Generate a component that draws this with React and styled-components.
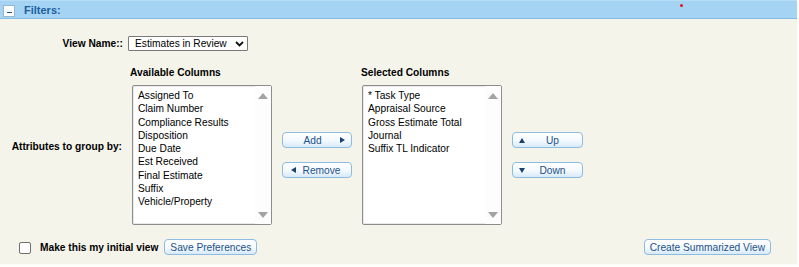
import React from "react";
import styled, { createGlobalStyle } from "styled-components";

const GlobalStyle = createGlobalStyle`
  html, body {
    margin: 0;
    padding: 0;
    background: #ffffff;
  }
  body {
    font-family: "Liberation Sans", Arial, sans-serif;
    font-size: 10.2px;
    color: #000;
  }
`;

const Panel = styled.div`
  width: 797px;
  height: 264px;
  display: flex;
  flex-direction: column;
  background: #f5f4eb;
  border-right: 1px solid #fbfaf5;
  border-bottom: 1px solid #fbfaf5;
`;

const Header = styled.div`
  height: 17px;
  display: flex;
  align-items: center;
  gap: 9px;
  padding: 0 3px;
  background: #a4d3f4;
  border-top: 1px solid #b6dcf6;
  border-bottom: 1px solid #85bce5;
  position: relative;
`;

const Toggle = styled.span`
  width: 10px;
  height: 10px;
  margin-top: 3px;
  display: flex;
  align-items: center;
  justify-content: center;
  background: #fcfdfe;
  border: 1px solid #9ab6cc;
  &::after {
    content: "";
    width: 5px;
    height: 1px;
    margin-top: 2px;
    background: #1d4c7c;
  }
`;

const Title = styled.span`
  font-size: 11px;
  font-weight: bold;
  color: #215f9c;
`;

const RedDot = styled.span`
  position: absolute;
  left: 680px;
  top: 3px;
  width: 3px;
  height: 3px;
  border-radius: 50%;
  background: #e4101e;
`;

const Body = styled.div`
  flex: 1;
  display: flex;
  flex-direction: column;
  padding-top: 17px;
`;

const ViewRow = styled.div`
  display: flex;
  align-items: center;
  gap: 5px;
`;

const Label = styled.div`
  width: ${(p) => p.$width || 123}px;
  text-align: right;
  font-weight: bold;
`;

const SelectBox = styled.div`
  box-sizing: border-box;
  width: 120px;
  height: 15px;
  display: flex;
  align-items: center;
  justify-content: space-between;
  padding: 0 3px 0 6px;
  background: #fff;
  border: 1px solid #7a7a7a;
  border-radius: 1px;
`;

const Grid = styled.div`
  display: grid;
  grid-template-columns: 122px 140px 70px 140px 71px;
  grid-template-rows: 20px 140px;
  column-gap: 10px;
  margin-top: 14px;
`;

const GroupLabel = styled(Label)`
  grid-row: 1 / span 2;
  grid-column: 1;
  align-self: center;
  width: auto;
  padding-top: 2px;
`;

const ColHead = styled.div`
  grid-row: 1;
  grid-column: ${(p) => p.$col};
  margin-left: ${(p) => p.$shift}px;
  padding-top: 2px;
  font-weight: bold;
`;

const ListBox = styled.div`
  grid-row: 2;
  grid-column: ${(p) => p.$col};
  display: flex;
  background: #fff;
  border: 1px solid #8d8d8d;
  border-radius: 2px;
  box-shadow: inset 0 0 0 1px #e9e9e9;
`;

const Items = styled.ul`
  flex: 1;
  list-style: none;
  margin: 0;
  padding: 3px 0 0 5px;
  li {
    line-height: 13.25px;
    white-space: nowrap;
  }
`;

const Scroll = styled.div`
  width: 16px;
  display: flex;
  flex-direction: column;
  justify-content: space-between;
  align-items: center;
  padding: 7px 0 6px;
  background: #fdfdfd;
`;

const Arrow = styled.span`
  width: 0;
  height: 0;
  border-left: 5px solid transparent;
  border-right: 5px solid transparent;
  ${(p) =>
    p.$down
      ? "border-top: 6px solid #a3a3a3;"
      : "border-bottom: 6px solid #a3a3a3;"}
`;

const ButtonStack = styled.div`
  grid-row: 2;
  grid-column: ${(p) => p.$col};
  display: flex;
  flex-direction: column;
  justify-content: center;
  gap: 14px;
`;

const Button = styled.button`
  height: 16px;
  display: flex;
  align-items: center;
  padding: 0 ${(p) => p.$pad ?? 6}px;
  gap: 4px;
  font-family: "Liberation Sans", Arial, sans-serif;
  font-size: 10.2px;
  color: #1f5286;
  background: linear-gradient(#ffffff 0%, #f3f9fe 55%, #d6eaf9 100%);
  border: 1px solid #8fbbe0;
  border-radius: 4px;
  cursor: pointer;
`;

const BtnText = styled.span`
  flex: 1;
  text-align: center;
`;

const Tri = styled.span`
  width: 0;
  height: 0;
  ${(p) =>
    ({
      right:
        "border-top: 3.5px solid transparent; border-bottom: 3.5px solid transparent; border-left: 5px solid #1b406d;",
      left:
        "border-top: 3.5px solid transparent; border-bottom: 3.5px solid transparent; border-right: 5px solid #1b406d;",
      up:
        "border-left: 3.5px solid transparent; border-right: 3.5px solid transparent; border-bottom: 5px solid #1b406d;",
      down:
        "border-left: 3.5px solid transparent; border-right: 3.5px solid transparent; border-top: 5px solid #1b406d;",
    })[p.$dir]}
`;

const Footer = styled.div`
  display: flex;
  align-items: center;
  margin-top: 14px;
  padding: 0 26px 0 19px;
`;

const Check = styled.span`
  width: 10px;
  height: 10px;
  margin: 1px 9px 0 0;
  background: #fff;
  border: 1px solid #6f6f6f;
  border-radius: 2px;
`;

const CheckLabel = styled.span`
  font-weight: bold;
  margin-right: 6px;
`;

const Spacer = styled.div`
  flex: 1;
`;

const available = [
  "Assigned To",
  "Claim Number",
  "Compliance Results",
  "Disposition",
  "Due Date",
  "Est Received",
  "Final Estimate",
  "Suffix",
  "Vehicle/Property",
];

const selected = [
  "* Task Type",
  "Appraisal Source",
  "Gross Estimate Total",
  "Journal",
  "Suffix TL Indicator",
];

function List({ col, items }) {
  return (
    <ListBox $col={col}>
      <Items>
        {items.map((item) => (
          <li key={item}>{item}</li>
        ))}
      </Items>
      <Scroll>
        <Arrow />
        <Arrow $down />
      </Scroll>
    </ListBox>
  );
}

export default function App() {
  return (
    <>
      <GlobalStyle />
      <Panel>
        <Header>
          <Toggle />
          <Title>Filters:</Title>
          <RedDot />
        </Header>
        <Body>
          <ViewRow>
            <Label>View Name::</Label>
            <SelectBox>
              <span>Estimates in Review</span>
              <svg width="9" height="6" viewBox="0 0 9 6">
                <path
                  d="M1 1 L4.5 4.5 L8 1"
                  fill="none"
                  stroke="#111"
                  strokeWidth="1.8"
                />
              </svg>
            </SelectBox>
          </ViewRow>
          <Grid>
            <GroupLabel>Attributes to group by:</GroupLabel>
            <ColHead $col={2} $shift={-2}>
              Available Columns
            </ColHead>
            <ColHead $col={4} $shift={-1}>
              Selected Columns
            </ColHead>
            <List col={2} items={available} />
            <ButtonStack $col={3}>
              <Button $pad={6}>
                <BtnText>Add</BtnText>
                <Tri $dir="right" />
              </Button>
              <Button $pad={8}>
                <Tri $dir="left" />
                <BtnText>Remove</BtnText>
              </Button>
            </ButtonStack>
            <List col={4} items={selected} />
            <ButtonStack $col={5}>
              <Button $pad={6}>
                <Tri $dir="up" />
                <BtnText>Up</BtnText>
              </Button>
              <Button $pad={6}>
                <Tri $dir="down" />
                <BtnText>Down</BtnText>
              </Button>
            </ButtonStack>
          </Grid>
          <Footer>
            <Check />
            <CheckLabel>Make this my initial view</CheckLabel>
            <Button $pad={5}>Save Preferences</Button>
            <Spacer />
            <Button $pad={5}>Create Summarized View</Button>
          </Footer>
        </Body>
      </Panel>
    </>
  );
}
